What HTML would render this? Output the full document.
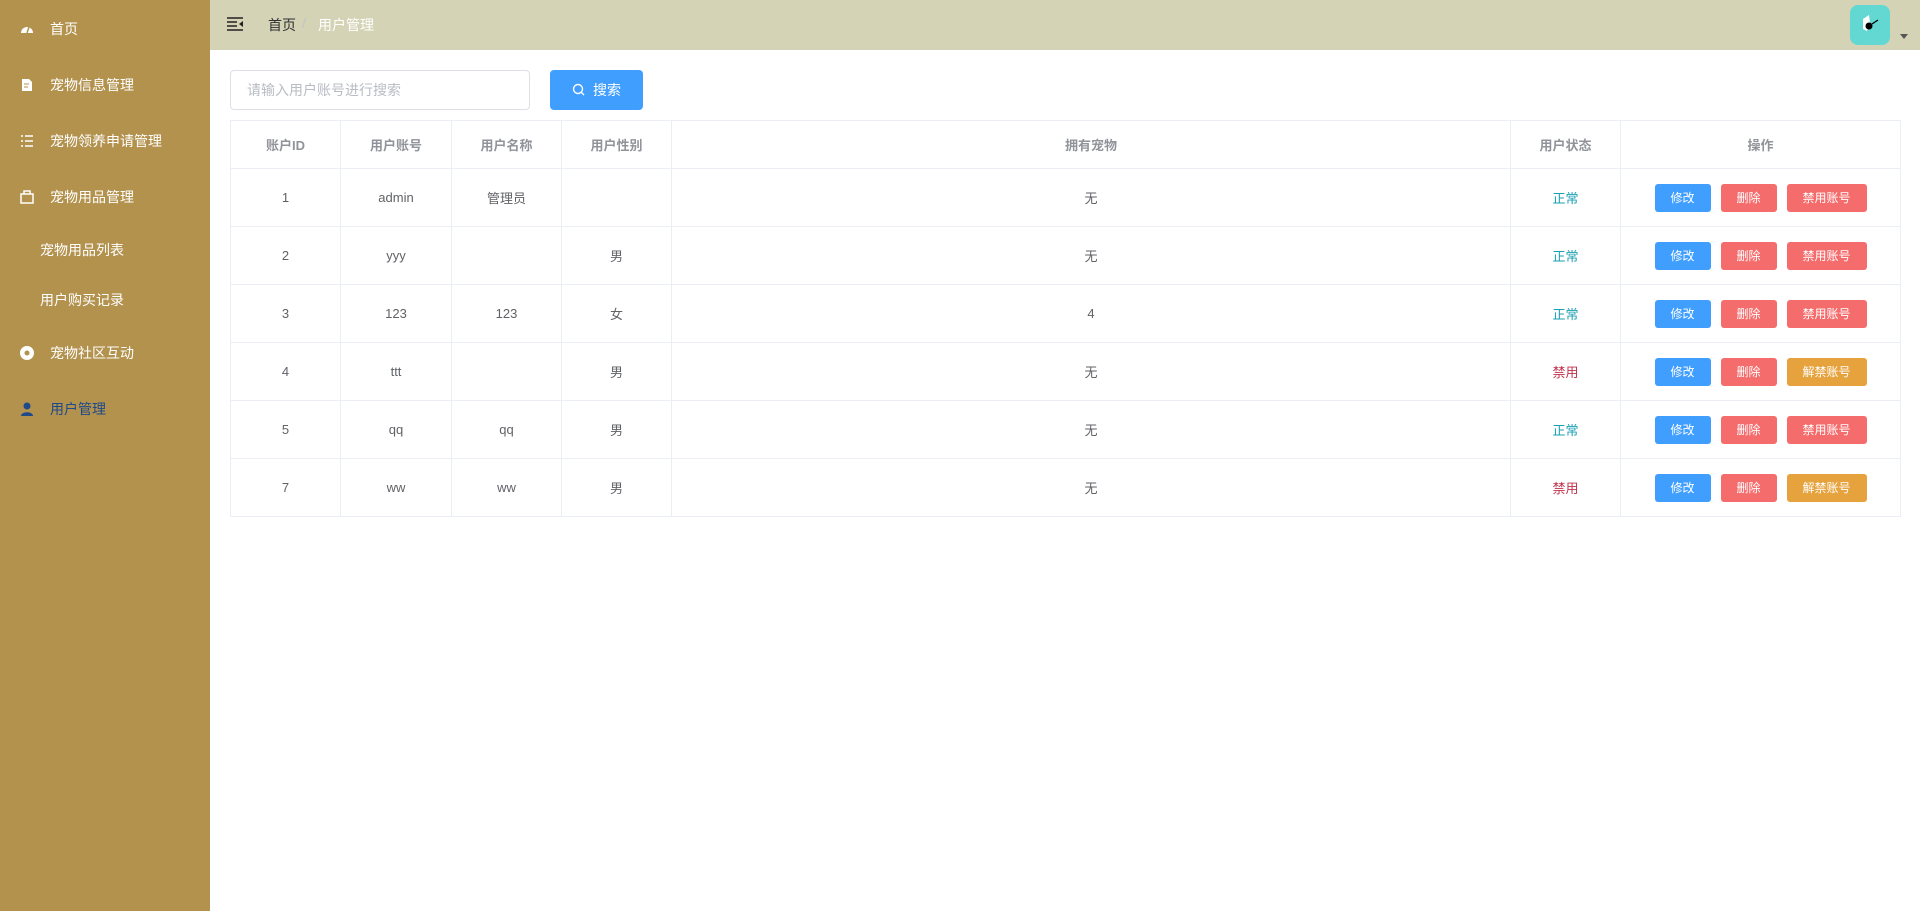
<!DOCTYPE html>
<html><head><meta charset="utf-8"><style>
*{margin:0;padding:0;box-sizing:border-box}
body{width:1920px;height:911px;overflow:hidden;font-family:"Liberation Sans","Noto Sans CJK SC",sans-serif;background:#fff;position:relative;color:#606266}
.side{position:absolute;left:0;top:0;width:210px;height:911px;background:#b3924e}
.mi{position:absolute;left:0;width:210px;height:20px;line-height:20px;color:#fff;font-size:14px}
.mi .t{position:absolute;left:50px;top:0}
.mi .i{position:absolute;left:20px;top:3px;width:14px;height:14px}
.sub .t{left:40px}
.hdr{position:absolute;left:210px;top:0;width:1710px;height:50px;background:#d4d3b5}
.inp{position:absolute;left:230px;top:70px;width:300px;height:40px;border:1px solid #dcdfe6;border-radius:4px;font-size:14px;color:#b8bcc4;padding-left:16px;line-height:38px}
.sbtn{position:absolute;left:550px;top:70px;width:93px;height:40px;background:#409eff;border-radius:4px;color:#fff;font-size:14px;line-height:40px;text-align:center}
table{position:absolute;left:230px;top:120px;width:1670px;border-collapse:collapse;font-size:13px;table-layout:fixed}
td,th{border:1px solid #ebeef5;text-align:center;height:58px;color:#606266;font-weight:normal}
th{height:48px;color:#909399;font-weight:bold;font-size:13px}
.b{display:inline-block;height:28px;line-height:28px;border-radius:3px;color:#fff;font-size:12px;margin:0 5px;vertical-align:middle}
.bl{background:#409eff;width:56px}.rd{background:#f56c6c;width:56px}.r2{background:#f56c6c;width:80px}.or{background:#e6a23c;width:80px}
.ok{color:#1b9fb3}.no{color:#c0304a}
</style></head><body>
<div class="side">
<div class="mi" style="top:19px"><svg class="i" viewBox="0 0 14 14"><path d="M1 11A6 6 0 1 1 13 11Z" fill="#fff"/><path d="M7 11L9 5" stroke="#b3924e" stroke-width="1.5"/></svg><span class="t">首页</span></div>
<div class="mi" style="top:75px"><svg class="i" viewBox="0 0 14 14"><path d="M2 1H9L12 4V13H2Z" fill="#fff"/><path d="M4 6H9M4 9H8" stroke="#b3924e"/></svg><span class="t">宠物信息管理</span></div>
<div class="mi" style="top:131px"><svg class="i" viewBox="0 0 14 14" stroke="#fff" stroke-width="1.5"><path d="M1 2H3M5 2H13M1 7H3M5 7H13M1 12H3M5 12H13"/></svg><span class="t">宠物领养申请管理</span></div>
<div class="mi" style="top:187px"><svg class="i" viewBox="0 0 14 14" fill="none" stroke="#fff" stroke-width="1.5"><path d="M1 4H13V13H1ZM4 4V1H10V4"/></svg><span class="t">宠物用品管理</span></div>
<div class="mi sub" style="top:240px"><span class="t">宠物用品列表</span></div>
<div class="mi sub" style="top:290px"><span class="t">用户购买记录</span></div>
<div class="mi" style="top:343px"><svg class="i" viewBox="0 0 14 14"><circle cx="7" cy="7" r="7" fill="#fff"/><circle cx="7" cy="7" r="2.5" fill="#b3924e"/></svg><span class="t">宠物社区互动</span></div>
<div class="mi" style="top:399px;color:#1e4a8a"><svg class="i" viewBox="0 0 14 14" fill="#1e4a8a"><circle cx="7" cy="4" r="3.5"/><path d="M1 14C1 9 13 9 13 14Z"/></svg><span class="t">用户管理</span></div>
</div>
<div class="hdr">
<svg style="position:absolute;left:17px;top:17px" width="16" height="14" viewBox="0 0 16 14" stroke="#222" stroke-width="1.6"><path d="M0 1H16M0 5H10M0 9H10M0 13H16"/><path d="M16 4L12 7L16 10Z" fill="#222" stroke="none"/></svg>
<span style="position:absolute;left:58px;top:15px;font-size:14px;color:#303133">首页</span>
<span style="position:absolute;left:92px;top:15px;font-size:14px;color:#c0c4cc">/</span>
<span style="position:absolute;left:108px;top:15px;font-size:14px;color:#fff">用户管理</span>
<div style="position:absolute;left:1640px;top:5px;width:40px;height:40px;border-radius:8px;background:#63d8d3"><svg width="40" height="40" viewBox="0 0 40 40"><path d="M13 14L19 10L20 18L17 26L13 24Z" fill="#fff"/><circle cx="19" cy="21" r="3.5" fill="#000"/><path d="M22 19L28 15" stroke="#000" stroke-width="1.2"/></svg></div>
<svg style="position:absolute;left:1690px;top:34px" width="8" height="5"><path d="M0 0H8L4 5Z" fill="#555"/></svg>
</div>
<div class="inp">请输入用户账号进行搜索</div>
<div class="sbtn"><svg width="13" height="13" viewBox="0 0 13 13" style="vertical-align:-1px;margin-right:8px" fill="none" stroke="#fff" stroke-width="1.4"><circle cx="6" cy="6" r="4.5"/><path d="M9.5 9.5L12 12"/></svg>搜索</div>
<table>
<colgroup><col style="width:110px"><col style="width:111px"><col style="width:110px"><col style="width:110px"><col style="width:839px"><col style="width:110px"><col style="width:280px"></colgroup>
<tr><th>账户ID</th><th>用户账号</th><th>用户名称</th><th>用户性别</th><th>拥有宠物</th><th>用户状态</th><th>操作</th></tr>
<tr><td>1</td><td>admin</td><td>管理员</td><td></td><td>无</td><td class="ok">正常</td><td><span class="b bl">修改</span><span class="b rd">删除</span><span class="b r2">禁用账号</span></td></tr>
<tr><td>2</td><td>yyy</td><td></td><td>男</td><td>无</td><td class="ok">正常</td><td><span class="b bl">修改</span><span class="b rd">删除</span><span class="b r2">禁用账号</span></td></tr>
<tr><td>3</td><td>123</td><td>123</td><td>女</td><td>4</td><td class="ok">正常</td><td><span class="b bl">修改</span><span class="b rd">删除</span><span class="b r2">禁用账号</span></td></tr>
<tr><td>4</td><td>ttt</td><td></td><td>男</td><td>无</td><td class="no">禁用</td><td><span class="b bl">修改</span><span class="b rd">删除</span><span class="b or">解禁账号</span></td></tr>
<tr><td>5</td><td>qq</td><td>qq</td><td>男</td><td>无</td><td class="ok">正常</td><td><span class="b bl">修改</span><span class="b rd">删除</span><span class="b r2">禁用账号</span></td></tr>
<tr><td>7</td><td>ww</td><td>ww</td><td>男</td><td>无</td><td class="no">禁用</td><td><span class="b bl">修改</span><span class="b rd">删除</span><span class="b or">解禁账号</span></td></tr>
</table>
</body></html>
